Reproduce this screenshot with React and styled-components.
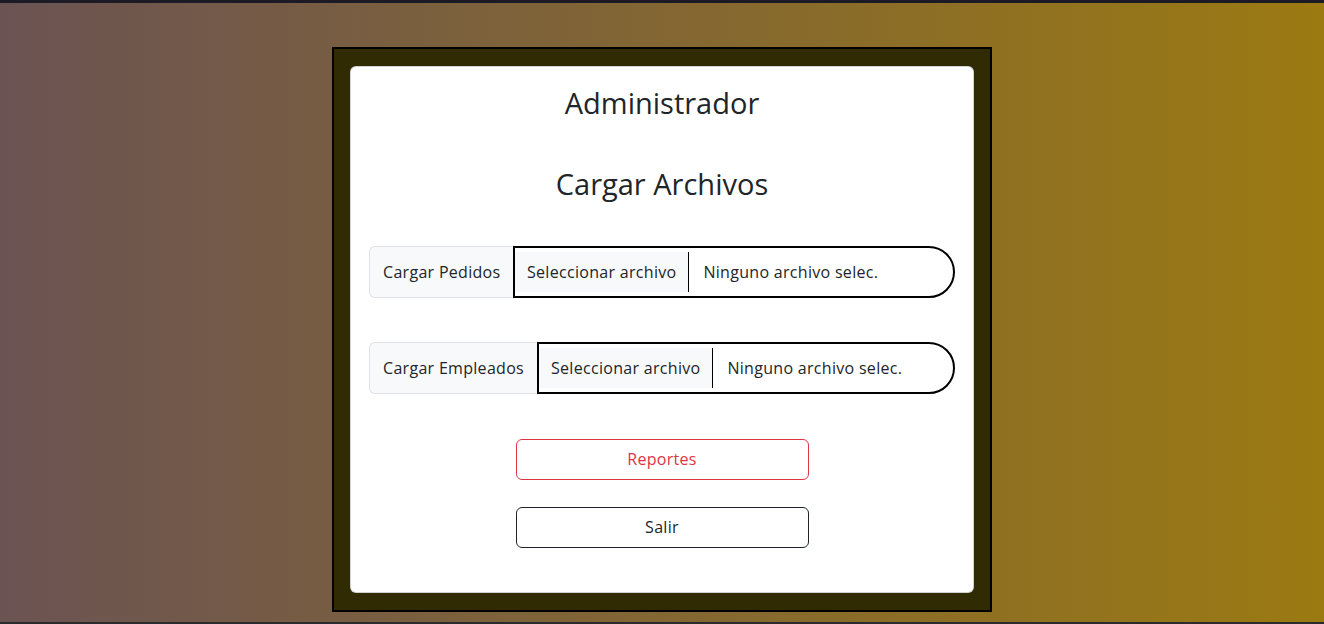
import React from "react";
import styled, { createGlobalStyle } from "styled-components";

const Global = createGlobalStyle`
  * { box-sizing: border-box; }
  html, body { margin: 0; padding: 0; }
  body {
    font-family: "Open Sans", "Noto Sans", sans-serif;
    color: #212529;
    background: #1c1a26;
  }
`;

const Page = styled.div`
  min-height: 624px;
  border-top: 3px solid #1b1a25;
  border-bottom: 2px solid #2b2a2c;
  background: linear-gradient(to right, #6b5353, #9b7a12);
  display: flex;
  justify-content: center;
  padding-top: 44px;
`;

const Frame = styled.div`
  width: 660px;
  height: 565px;
  border: 2px solid #000;
  background: #302b03;
  padding: 17px 16px 17px 16px;
`;

const Card = styled.div`
  height: 100%;
  background: #fff;
  border: 1px solid rgba(0, 0, 0, 0.175);
  border-radius: 6px;
  padding: 19px 18px 0;
  display: flex;
  flex-direction: column;
  align-items: center;
`;

const Title = styled.h2`
  margin: 0;
  font-weight: 400;
  font-size: ${(p) => p.$size}px;
  line-height: 1.2;
  margin-bottom: ${(p) => p.$mb}px;
`;

const Group = styled.div`
  display: flex;
  width: 100%;
  height: 52px;
  margin-bottom: ${(p) => p.$mb}px;
  font-size: 16px;
  letter-spacing: 0.3px;
`;

const Label = styled.span`
  display: flex;
  align-items: center;
  padding: 0 13px;
  width: ${(p) => p.$w}px;
  flex-shrink: 0;
  background: #f8f9fa;
  border: 1px solid #dee2e6;
  border-right: none;
  border-radius: 6px 0 0 6px;
  white-space: nowrap;
`;

const FileBox = styled.div`
  flex: 1;
  display: flex;
  align-items: center;
  border: 2px solid #000;
  border-radius: 0 26px 26px 0;
  padding: 4px 0;
`;

const FileButton = styled.span`
  display: flex;
  align-items: center;
  align-self: stretch;
  padding: 0 12px;
  background: #f8f9fa;
  border-right: 1px solid #000;
  white-space: nowrap;
`;

const FileText = styled.span`
  padding-left: 14px;
  white-space: nowrap;
`;

const Button = styled.button`
  width: 293px;
  height: 41px;
  font-family: inherit;
  font-size: 16px;
  letter-spacing: 0.3px;
  background: #fff;
  border-radius: 6px;
  border: 1px solid ${(p) => p.$color};
  color: ${(p) => p.$color};
  margin-bottom: ${(p) => p.$mb}px;
  cursor: pointer;
`;

function FileRow({ label, width, mb }) {
  return (
    <Group $mb={mb}>
      <Label $w={width}>{label}</Label>
      <FileBox>
        <FileButton>Seleccionar archivo</FileButton>
        <FileText>Ninguno archivo selec.</FileText>
      </FileBox>
    </Group>
  );
}

export default function App() {
  return (
    <>
      <Global />
      <Page>
        <Frame>
          <Card>
            <Title $size={29} $mb={46}>Administrador</Title>
            <Title $size={29} $mb={44}>Cargar Archivos</Title>
            <FileRow label="Cargar Pedidos" width={144} mb={44} />
            <FileRow label="Cargar Empleados" width={168} mb={45} />
            <Button $color="#dc3545" $mb={27}>Reportes</Button>
            <Button $color="#212529" $mb={0}>Salir</Button>
          </Card>
        </Frame>
      </Page>
    </>
  );
}
